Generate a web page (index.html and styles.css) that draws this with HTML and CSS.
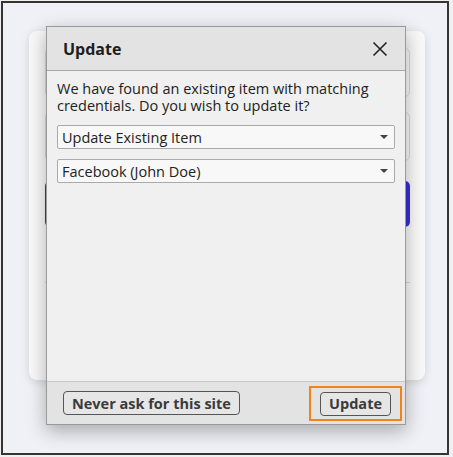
FILE: index.html
```html
<!DOCTYPE html>
<html lang="en">
<head>
    <meta charset="UTF-8">
    <meta name="viewport" content="width=device-width, initial-scale=1.0">
    <title>Update</title>
    <link rel="stylesheet" href="styles.css">
</head>
<body>
    <div class="frame">
        <div class="card">
            <div class="field"></div>
            <div class="field"></div>
            <div class="primary"></div>
            <div class="divider"></div>
        </div>

        <div class="dialog">
            <div class="dialog-header">
                <h1>Update</h1>
                <span class="close">
                    <svg width="16" height="16" viewBox="0 0 16 16">
                        <path d="M1.5 1.5 L14.5 14.5 M14.5 1.5 L1.5 14.5" stroke="#222" stroke-width="1.6" fill="none"/>
                    </svg>
                </span>
            </div>
            <div class="dialog-body">
                <p>We have found an existing item with matching credentials. Do you wish to update it?</p>
                <div class="select">
                    <span>Update Existing Item</span>
                    <span class="arrow"></span>
                </div>
                <div class="select">
                    <span>Facebook (John Doe)</span>
                    <span class="arrow"></span>
                </div>
            </div>
            <div class="dialog-footer">
                <button class="btn">Never ask for this site</button>
                <span class="focus">
                    <button class="btn">Update</button>
                </span>
            </div>
        </div>
    </div>
</body>
</html>
```

FILE: styles.css
```css
* {
    margin: 0;
    padding: 0;
    box-sizing: border-box;
}

body {
    font-family: 'Open Sans', 'Noto Sans', sans-serif;
    background: #eef0f5;
}

.frame {
    position: relative;
    margin: 1px;
    width: 448px;
    height: 454px;
    border: 2px solid #3a342e;
    background: #eff1f6;
    padding: 28px 0 0 26px;
}

.card {
    width: 396px;
    height: 349px;
    background: #f9f9fa;
    border-radius: 8px;
    box-shadow: 0 2px 10px rgba(0,0,0,0.12);
    padding: 17px 15px 0 16px;
}

.field {
    height: 49px;
    border: 1px solid #dadada;
    border-radius: 5px;
    margin-bottom: 15px;
}

.field + .field {
    margin-bottom: 20px;
}

.primary {
    height: 46px;
    background: #3b2fd8;
    border-radius: 5px;
    margin-bottom: 55px;
}

.divider {
    height: 1px;
    background: #d8d8d8;
}

.dialog {
    position: absolute;
    left: 43px;
    top: 23px;
    width: 360px;
    height: 399px;
    background: #f0f0f0;
    border: 1px solid #9a9a9a;
    box-shadow: 0 6px 18px rgba(0,0,0,0.3);
    display: flex;
    flex-direction: column;
}

.dialog-header {
    height: 44px;
    background: #e3e3e3;
    border-bottom: 1px solid #a8a8a8;
    display: flex;
    align-items: center;
    justify-content: space-between;
    padding: 0 17px 0 16px;
}

.dialog-header h1 {
    font-size: 16px;
    font-weight: 700;
    color: #1e1e1e;
}

.close {
    display: flex;
}

.dialog-body {
    flex: 1;
    padding: 9px 10px 0 10px;
}

.dialog-body p {
    font-size: 14.5px;
    line-height: 17px;
    color: #222;
    margin-bottom: 11px;
}

.select {
    height: 24px;
    background: #f8f8f8;
    border: 1px solid #aaa;
    border-radius: 2px;
    display: flex;
    align-items: center;
    justify-content: space-between;
    padding: 0 6px 0 4px;
    font-size: 14.5px;
    line-height: 17px;
    color: #222;
    margin-bottom: 10px;
}

.arrow {
    width: 0;
    height: 0;
    border-left: 4px solid transparent;
    border-right: 4px solid transparent;
    border-top: 4px solid #444;
}

.dialog-footer {
    height: 43px;
    background: #e3e3e3;
    border-top: 1px solid #c8c8c8;
    display: flex;
    align-items: center;
    justify-content: space-between;
    padding: 0 3px 0 16px;
}

.btn {
    font-family: 'Open Sans', 'Noto Sans', sans-serif;
    font-size: 14.5px;
    font-weight: 700;
    color: #3a3a3a;
    background: #e6e6e6;
    border: 1px solid #555;
    border-radius: 4px;
    height: 24px;
    line-height: 17px;
    padding: 0 8px;
}

.focus {
    display: flex;
    border: 2px solid #f0841c;
    padding: 4px 9px 3px 9px;
}
```
